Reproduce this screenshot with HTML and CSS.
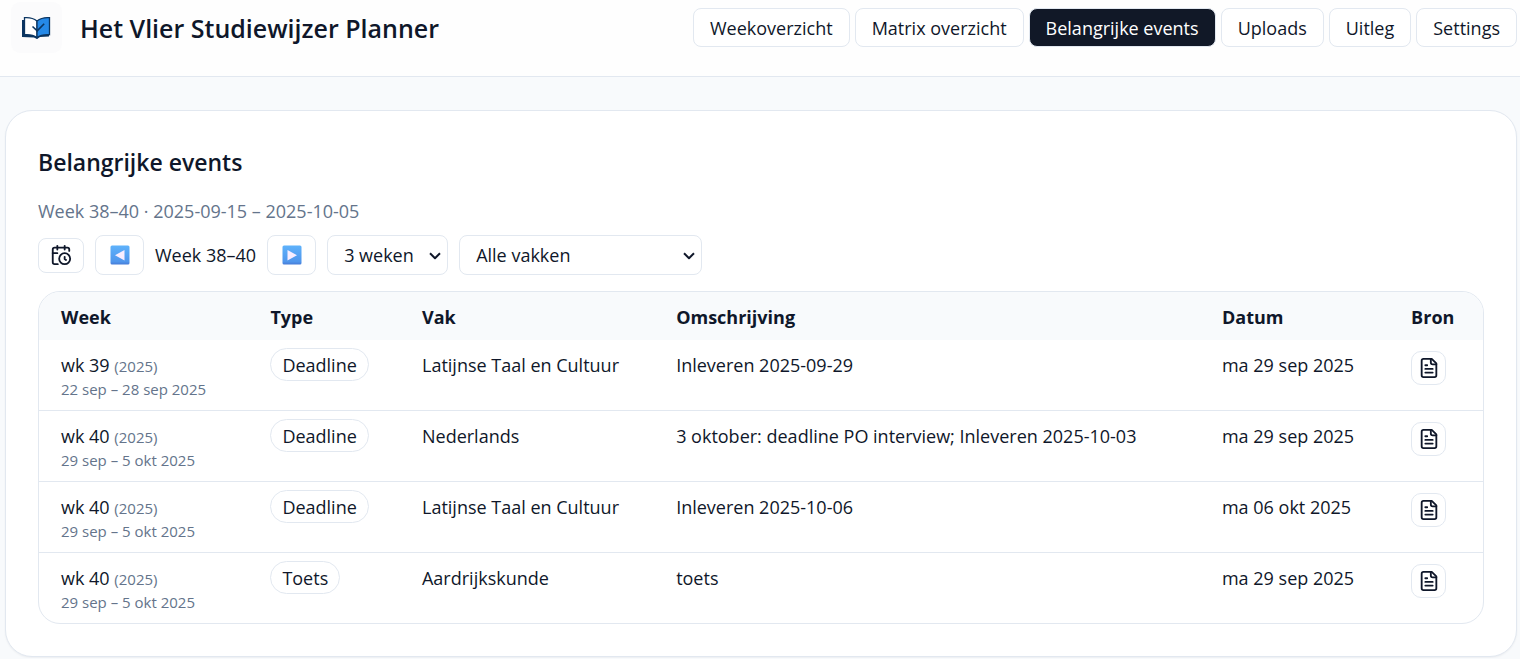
FILE: index.html
```html
<!DOCTYPE html>
<html lang="nl">
<head>
<meta charset="utf-8">
<meta name="viewport" content="width=device-width, initial-scale=1">
<title>Het Vlier Studiewijzer Planner</title>
<link rel="stylesheet" href="styles.css">
</head>
<body>
<svg class="sprite" aria-hidden="true">
  <symbol id="icon-file" viewBox="0 0 24 24">
    <path d="M15 2H6a2 2 0 0 0-2 2v16a2 2 0 0 0 2 2h12a2 2 0 0 0 2-2V7Z"/>
    <path d="M14 2v4a2 2 0 0 0 2 2h4"/>
    <path d="M10 9H8"/><path d="M16 13H8"/><path d="M16 17H8"/>
  </symbol>
  <symbol id="icon-chevron" viewBox="0 0 12 8">
    <path d="M1 1.2 6 6.2l5-5"/>
  </symbol>
</svg>

<header class="topbar">
  <div class="brand">
    <span class="logo">
      <svg viewBox="0 0 34 24" width="34" height="24" aria-hidden="true">
        <path d="M2 4h3v14.500h9l3 2 3-2h9V20.500l-9 .5-3 2-3-1.500L2 21Z" fill="#0b3561"/>
        <path d="M17 5C13.500 2.200 9 1.300 4.500 1.700v17c4.500-.4 9 .3 12.500 2.800Z" fill="#fff" stroke="#0b3561" stroke-width="1.300"/>
        <path d="M17 5C20.500 2.200 25 1.300 29.500 1.700v17c-4.500-.4-9 .3-12.500 2.800Z" fill="#2589e8" stroke="#0b3561" stroke-width="1.300"/>
        <path d="m12.500 10.500 4.700 4.300 7-7" fill="none" stroke="#0b3561" stroke-width="1.600"/>
      </svg>
    </span>
    <h1 class="brand-title">Het Vlier Studiewijzer Planner</h1>
  </div>
  <nav class="nav">
    <a class="nav-link" href="#weekoverzicht">Weekoverzicht</a>
    <a class="nav-link" href="#matrix">Matrix overzicht</a>
    <a class="nav-link nav-link-active" href="#events" aria-current="page">Belangrijke events</a>
    <a class="nav-link" href="#uploads">Uploads</a>
    <a class="nav-link" href="#uitleg">Uitleg</a>
    <a class="nav-link" href="#settings">Settings</a>
  </nav>
</header>

<main class="page">
  <section class="card">
    <h2 class="card-title">Belangrijke events</h2>
    <p class="range">Week 38–40 · 2025-09-15 – 2025-10-05</p>

    <div class="controls">
      <button class="control today" type="button" aria-label="Naar huidige week">
        <svg class="line-icon" viewBox="0 0 24 24" width="22" height="22">
          <path d="M21 7.500V6a2 2 0 0 0-2-2H5a2 2 0 0 0-2 2v14a2 2 0 0 0 2 2h3.500"/>
          <path d="M16 2v4"/><path d="M8 2v4"/><path d="M3 10h5"/>
          <path d="M17.500 17.500 16 16.300V14"/><circle cx="16" cy="16" r="6"/>
        </svg>
      </button>
      <button class="control step" type="button" aria-label="Vorige">
        <svg viewBox="0 0 20 20" width="20" height="20">
          <defs><linearGradient id="blue" x1="0" y1="0" x2="0" y2="1"><stop offset="0" stop-color="#5eb2fb"/><stop offset="0.850" stop-color="#5096ec"/><stop offset="1" stop-color="#467bd6"/></linearGradient></defs>
          <rect x="0.500" y="0.500" width="19" height="19" rx="1.500" fill="url(#blue)"/>
          <path d="M14.500 5v10.500L5 10.200Z" fill="#f8edff"/>
        </svg>
      </button>
      <span class="week-label">Week 38–40</span>
      <button class="control step" type="button" aria-label="Volgende">
        <svg viewBox="0 0 20 20" width="20" height="20">
          <rect x="0.500" y="0.500" width="19" height="19" rx="1.500" fill="url(#blue)"/>
          <path d="M5.500 5v10.500l9.500-5.300Z" fill="#f8edff"/>
        </svg>
      </button>
      <span class="picker picker-weeks">
        <select class="control select" aria-label="Aantal weken"><option>3 weken</option></select>
        <svg class="chevron" width="12" height="8" aria-hidden="true"><use href="#icon-chevron"/></svg>
      </span>
      <span class="picker picker-subject">
        <select class="control select" aria-label="Vak"><option>Alle vakken</option></select>
        <svg class="chevron" width="12" height="8" aria-hidden="true"><use href="#icon-chevron"/></svg>
      </span>
    </div>

    <div class="table-wrap">
      <table class="events">
        <colgroup><col class="col-week"><col class="col-type"><col class="col-vak"><col class="col-desc"><col class="col-date"><col></colgroup>
        <thead>
          <tr><th scope="col">Week</th><th scope="col">Type</th><th scope="col">Vak</th><th scope="col">Omschrijving</th><th scope="col">Datum</th><th scope="col">Bron</th></tr>
        </thead>
        <tbody>
          <tr>
            <td>wk 39 <span class="year">(2025)</span><div class="dates">22 sep – 28 sep 2025</div></td>
            <td class="type"><span class="badge">Deadline</span></td>
            <td>Latijnse Taal en Cultuur</td>
            <td>Inleveren 2025-09-29</td>
            <td>ma 29 sep 2025</td>
            <td class="source"><button class="doc" type="button" aria-label="Open bron"><svg class="line-icon" width="22" height="22"><use href="#icon-file"/></svg></button></td>
          </tr>
          <tr>
            <td>wk 40 <span class="year">(2025)</span><div class="dates">29 sep – 5 okt 2025</div></td>
            <td class="type"><span class="badge">Deadline</span></td>
            <td>Nederlands</td>
            <td>3 oktober: deadline PO interview; Inleveren 2025-10-03</td>
            <td>ma 29 sep 2025</td>
            <td class="source"><button class="doc" type="button" aria-label="Open bron"><svg class="line-icon" width="22" height="22"><use href="#icon-file"/></svg></button></td>
          </tr>
          <tr>
            <td>wk 40 <span class="year">(2025)</span><div class="dates">29 sep – 5 okt 2025</div></td>
            <td class="type"><span class="badge">Deadline</span></td>
            <td>Latijnse Taal en Cultuur</td>
            <td>Inleveren 2025-10-06</td>
            <td>ma 06 okt 2025</td>
            <td class="source"><button class="doc" type="button" aria-label="Open bron"><svg class="line-icon" width="22" height="22"><use href="#icon-file"/></svg></button></td>
          </tr>
          <tr>
            <td>wk 40 <span class="year">(2025)</span><div class="dates">29 sep – 5 okt 2025</div></td>
            <td class="type"><span class="badge">Toets</span></td>
            <td>Aardrijkskunde</td>
            <td>toets</td>
            <td>ma 29 sep 2025</td>
            <td class="source"><button class="doc" type="button" aria-label="Open bron"><svg class="line-icon" width="22" height="22"><use href="#icon-file"/></svg></button></td>
          </tr>
        </tbody>
      </table>
    </div>
  </section>
</main>
</body>
</html>
```
FILE: styles.css
```css
:root {
  --ink: #0f172a;
  --muted: #64748b;
  --line: #e2e8f0;
  --soft: #f8fafc;
}

* { box-sizing: border-box; }

body {
  margin: 0;
  background: var(--soft);
  color: var(--ink);
  font: 18px/27px "Segoe UI", "Open Sans", "Noto Sans", sans-serif;
}

.sprite { display: none; }

.topbar {
  display: flex;
  justify-content: space-between;
  align-items: flex-start;
  padding: 2px 3px 23px 11px;
  background: #fefefe;
  border-bottom: 1px solid var(--line);
}

.brand {
  display: flex;
  align-items: center;
  gap: 18px;
}

.logo {
  display: flex;
  align-items: center;
  justify-content: center;
  width: 51px;
  height: 51px;
  border-radius: 9px;
  background: #fbfbfc;
}

.brand-title {
  margin: 0;
  font-size: 25px;
  line-height: 32px;
  font-weight: 600;
}

.nav {
  display: flex;
  gap: 5px;
  padding-top: 6px;
}

.nav-link {
  padding: 6px 16px 4px;
  border: 1px solid var(--line);
  border-radius: 8px;
  background: #fff;
  color: var(--ink);
  text-decoration: none;
  white-space: nowrap;
}

.nav-link-active {
  background: #111827;
  color: #fff;
}

.page { padding: 33px 3px 1px 5px; }

.card {
  padding: 32px;
  border: 1px solid var(--line);
  border-radius: 27px;
  background: #fff;
  box-shadow: 0 1px 2px rgb(15 23 42 / 5%);
}

.card-title {
  margin: 0;
  padding: 2px 0 20px;
  font-size: 23px;
  line-height: 34px;
  font-weight: 600;
}

.range {
  margin: 0 0 12px;
  line-height: 24px;
  color: var(--muted);
}

.controls {
  display: flex;
  align-items: center;
  gap: 11px;
  margin-bottom: 16px;
}

.control {
  display: flex;
  align-items: center;
  justify-content: center;
  height: 40px;
  border: 1px solid var(--line);
  border-radius: 8px;
  background: #fff;
  color: var(--ink);
  font: inherit;
}

.today {
  width: 46px;
  height: 35px;
  padding: 0;
}

.step {
  width: 49px;
  padding: 0;
}

.picker {
  display: grid;
  position: relative;
}

.picker-weeks { width: 121px; }
.picker-subject { width: 243px; }

.select {
  width: 100%;
  padding: 0 16px;
  appearance: none;
}

.chevron {
  position: absolute;
  right: 7px;
  top: 17px;
  pointer-events: none;
  fill: none;
  stroke: var(--ink);
  stroke-width: 2;
  stroke-linejoin: round;
}

.line-icon {
  display: block;
  fill: none;
  stroke: var(--ink);
  stroke-width: 2;
  stroke-linecap: round;
  stroke-linejoin: round;
}

.table-wrap {
  overflow: hidden;
  border: 1px solid var(--line);
  border-radius: 22px;
}

.events {
  width: 100%;
  table-layout: fixed;
  border-collapse: separate;
  border-spacing: 0;
}

.col-week { width: 14.5%; }
.col-type { width: 10.5%; }
.col-vak { width: 17.6%; }
.col-desc { width: 37.8%; }
.col-date { width: 13.1%; }

th {
  padding: 12px 22px 9px;
  background: var(--soft);
  text-align: left;
  font-weight: 700;
}

td {
  padding: 12px 22px 11px;
  border-bottom: 1px solid var(--line);
  vertical-align: top;
}

tbody tr:last-child td { border-bottom: 0; }

.year,
.dates {
  color: var(--muted);
  font-size: 15px;
}

.dates { line-height: 20px; }

td:first-child {
  line-height: 26px;
}

.type { padding-top: 8px; padding-bottom: 0; }

.badge {
  display: inline-block;
  padding: 3px 11px 1px;
  border: 1px solid var(--line);
  border-radius: 17px;
}

.source {
  padding-top: 11px;
  padding-bottom: 0;
}

.doc {
  display: flex;
  align-items: center;
  justify-content: center;
  width: 35px;
  height: 34px;
  padding: 0;
  border: 1px solid var(--line);
  border-radius: 10px;
  background: #fff;
}
```
